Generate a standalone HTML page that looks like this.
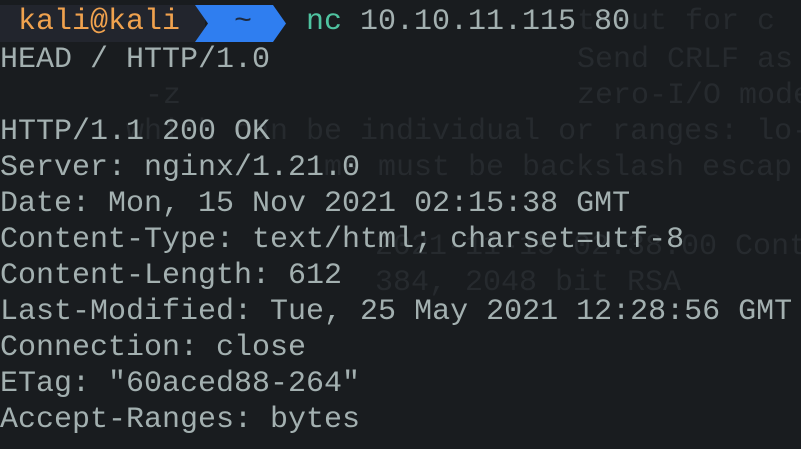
<!DOCTYPE html><html><head><style>
body{margin:0;width:801px;height:449px;background:#191c1f;overflow:hidden;position:relative;font-family:"Liberation Mono",monospace;}
.l{position:absolute;left:0;font-size:30px;line-height:36px;white-space:pre;color:#a3b0b0;letter-spacing:0px}
.g{position:absolute;font-size:30px;line-height:36px;white-space:pre;color:#262a2e}
</style></head><body>
<div class="g" style="left:577px;top:4px">teout for c</div>
<div class="g" style="left:577px;top:42px">Send CRLF as</div>
<div class="g" style="left:577px;top:78px">zero-I/O mode</div>
<div class="g" style="left:145px;top:78px">-z</div>
<div class="g" style="left:90px;top:114px">  which can be individual or ranges: lo-</div>
<div class="g" style="left:324px;top:150px">ms must be backslash escap</div>
<div class="g" style="left:375px;top:229px">2021-11-15 02:38:00 Cont</div>
<div class="g" style="left:375px;top:265px">384, 2048 bit RSA</div>
<div style="position:absolute;left:0;top:5px;width:205px;height:37px;background:#22252d"></div>
<svg style="position:absolute;left:195px;top:5px" width="95" height="37"><polygon points="0,0 78,0 91,18.5 78,37 0,37 13,18.5" fill="#2f7ef0"/></svg>
<div class="l" style="top:4px;left:18px;color:#f0a24e">kali@kali</div>
<div class="l" style="top:4px;left:234px;color:#1d2a40">~</div>
<div class="l" style="top:4px;left:306px"><span style="color:#4fc3a0">nc</span> 10.10.11.115 80</div>
<div class="l" style="top:42px">HEAD / HTTP/1.0</div>
<div class="l" style="top:114px">HTTP/1.1 200 OK</div>
<div class="l" style="top:150px">Server: nginx/1.21.0</div>
<div class="l" style="top:186px">Date: Mon, 15 Nov 2021 02:15:38 GMT</div>
<div class="l" style="top:222px">Content-Type: text/html; charset=utf-8</div>
<div class="l" style="top:258px">Content-Length: 612</div>
<div class="l" style="top:294px">Last-Modified: Tue, 25 May 2021 12:28:56 GMT</div>
<div class="l" style="top:330px">Connection: close</div>
<div class="l" style="top:366px">ETag: "60aced88-264"</div>
<div class="l" style="top:402px">Accept-Ranges: bytes</div>
</body></html>
